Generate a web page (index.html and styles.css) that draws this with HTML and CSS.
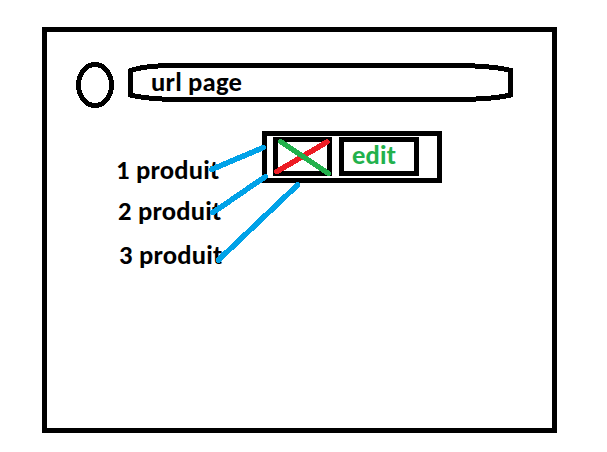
FILE: index.html
```html
<!DOCTYPE html>
<html lang="fr">
<head>
<meta charset="utf-8">
<title>url page</title>
<link rel="stylesheet" href="styles.css">
</head>
<body>
<main class="frame">
  <header class="topbar">
    <svg class="avatar" viewBox="0 0 38 46" shape-rendering="crispEdges"><ellipse cx="19" cy="23" rx="16.5" ry="20.5"/></svg>
    <div class="url">
      <svg class="url-shape" viewBox="0 0 385 39" shape-rendering="crispEdges"><path d="M2.5 7.5C10 5 25 2.5 47 2.5H335C352 3 370 4 382.500 7.500V32C370 35 345 36.500 325 36.500H47C25 36 10 34 2.500 32Z"/></svg>
      <span class="url-text">url page</span>
    </div>
  </header>
  <section class="content">
    <ul class="products">
      <li class="product">1 produit</li>
      <li class="product second">2 produit</li>
      <li class="product third">3 produit</li>
    </ul>
    <div class="actions">
      <div class="delete"></div>
      <div class="edit">edit</div>
    </div>
  </section>
  <svg class="strokes" viewBox="0 0 607 452" shape-rendering="crispEdges">
    <path class="red" d="M277 171.500L327 142"/>
    <path class="green" d="M280.500 141.500L328.500 173.500"/>
    <path class="blue" d="M211.500 169.500L263.500 147.500M213 212.500L265.500 176.500M218.500 260L297.500 185"/>
  </svg>
</main>
</body>
</html>
```

FILE: styles.css
```css
* { box-sizing: border-box; }
body {
  margin: 0;
  padding: 27px 0 0 42px;
  background: #fff;
  color: #000;
  font: bold 26.67px/30px Calibri, Carlito, Lato, sans-serif;
  font-variant-ligatures: none;
  letter-spacing: 0.18px;
}
.frame {
  width: 515px;
  height: 406px;
  border: 5px solid #000;
  padding-top: 30px;
}
.topbar {
  display: flex;
  gap: 14px;
  padding-left: 29px;
}
.avatar { width: 38px; height: 46px; }
.avatar, .url-shape { fill: none; stroke: #000; stroke-width: 5; }
.url {
  position: relative;
  width: 385px;
  height: 39px;
  margin-top: 1px;
  padding: 4px 0 0 23px;
}
.url-shape { position: absolute; inset: 0; width: 385px; height: 39px; }
.content {
  display: flex;
  align-items: flex-start;
  margin-top: 23px;
}
.products {
  list-style: none;
  width: 215px;
  margin: 0;
  padding: 24px 0 0 69px;
  white-space: nowrap;
}
.second { margin: 11px 0 14px 2px; }
.third { margin-left: 3px; }
.actions {
  display: flex;
  gap: 7px;
  width: 180px;
  height: 52px;
  border: 5px solid #000;
  padding: 1px 0 0 6px;
}
.delete, .edit { height: 39px; border: 5px solid #000; }
.delete { width: 59px; }
.edit { width: 80px; padding-left: 8px; line-height: 27px; color: #22b14c; }
.strokes {
  position: absolute;
  inset: 0;
  width: 607px;
  height: 452px;
  fill: none;
  stroke-width: 5.5;
  stroke-linecap: round;
}
.red { stroke: #ed1c24; }
.green { stroke: #22b14c; }
.blue { stroke: #00a2e8; }
```
